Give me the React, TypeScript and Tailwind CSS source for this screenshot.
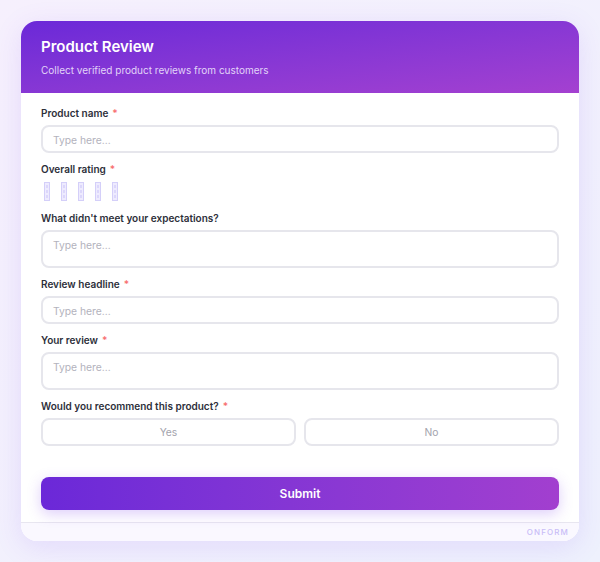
const Label = ({ text, required }: { text: string; required?: boolean }) => (
  <div className="h-4 mb-1 text-[10px] leading-4 font-semibold text-[#2d2f3a]">
    {text}
    {required && <span className="text-[#f87171] ml-1">*</span>}
  </div>
);

const TextInput = ({ tall }: { tall?: boolean }) => (
  <div
    className={`w-full ${tall ? "h-[38px]" : "h-[28px]"} rounded-lg border-2 border-[#e6e6ec] bg-white px-[10px] pt-[6px] text-[10.3px] leading-[14px] text-[#b3b3bd]`}
  >
    Type here...
  </div>
);

const RatingBox = () => (
  <div className="w-[6px] h-[19px] border border-[#d4cff9] bg-[#eeebfe] flex flex-col items-center justify-center gap-[2px]">
    <div className="w-[2px] h-[3px] bg-[#dcd7fb]" />
    <div className="w-[2px] h-[3px] bg-[#dcd7fb]" />
    <div className="w-[2px] h-[3px] bg-[#dcd7fb]" />
  </div>
);

function App() {
  return (
    <div
      className="min-h-screen w-full bg-gradient-to-br from-[#f6f0fd] to-[#eef1fd] pt-[21px] px-[21px]"
      style={{ fontFamily: "Inter, 'Noto Sans', sans-serif" }}
    >
      <div className="w-[558px] rounded-2xl bg-white overflow-hidden shadow-[0_6px_28px_rgba(124,58,237,0.13)]">
        <header className="h-[72px] px-5 pt-4 bg-gradient-to-br from-[#6b28d8] to-[#a440d0]">
          <h1 className="text-[15px] leading-5 font-semibold text-white">Product Review</h1>
          <p className="mt-[5px] text-[10px] leading-4 text-[#e2d4f8]">
            Collect verified product reviews from customers
          </p>
        </header>

        <main className="px-5 pt-3 pb-3">
          <div className="flex flex-col gap-2">
            <div>
              <Label text="Product name" required />
              <TextInput />
            </div>
            <div>
              <Label text="Overall rating" required />
              <div className="h-[20px] flex items-center gap-[11px] pl-[3px]">
                <RatingBox />
                <RatingBox />
                <RatingBox />
                <RatingBox />
                <RatingBox />
              </div>
            </div>
            <div className="pt-px">
              <Label text="What didn't meet your expectations?" />
              <TextInput tall />
            </div>
            <div>
              <Label text="Review headline" required />
              <TextInput />
            </div>
            <div>
              <Label text="Your review" required />
              <TextInput tall />
            </div>
            <div>
              <Label text="Would you recommend this product?" required />
              <div className="grid grid-cols-2 gap-2">
                <button className="h-[28px] pt-px rounded-lg border-2 border-[#e6e6ec] bg-white text-[10.3px] text-[#a3a3ad]">
                  Yes
                </button>
                <button className="h-[28px] pt-px rounded-lg border-2 border-[#e6e6ec] bg-white text-[10.3px] text-[#a3a3ad]">
                  No
                </button>
              </div>
            </div>
          </div>

          <button className="mt-[31px] w-full h-[33px] rounded-lg bg-gradient-to-r from-[#6b28d8] to-[#a23fcf] text-white text-[12px] font-semibold shadow-[0_4px_14px_rgba(124,58,237,0.25)]">
            Submit
          </button>
        </main>

        <footer className="h-[19px] border-t border-[#e8e6f0] bg-[#faf8ff] flex items-center justify-end pr-[10px]">
          <span className="text-[8px] tracking-[0.14em] font-medium text-[#c9bdf7]">ONFORM</span>
        </footer>
      </div>
    </div>
  );
}

export default App;
